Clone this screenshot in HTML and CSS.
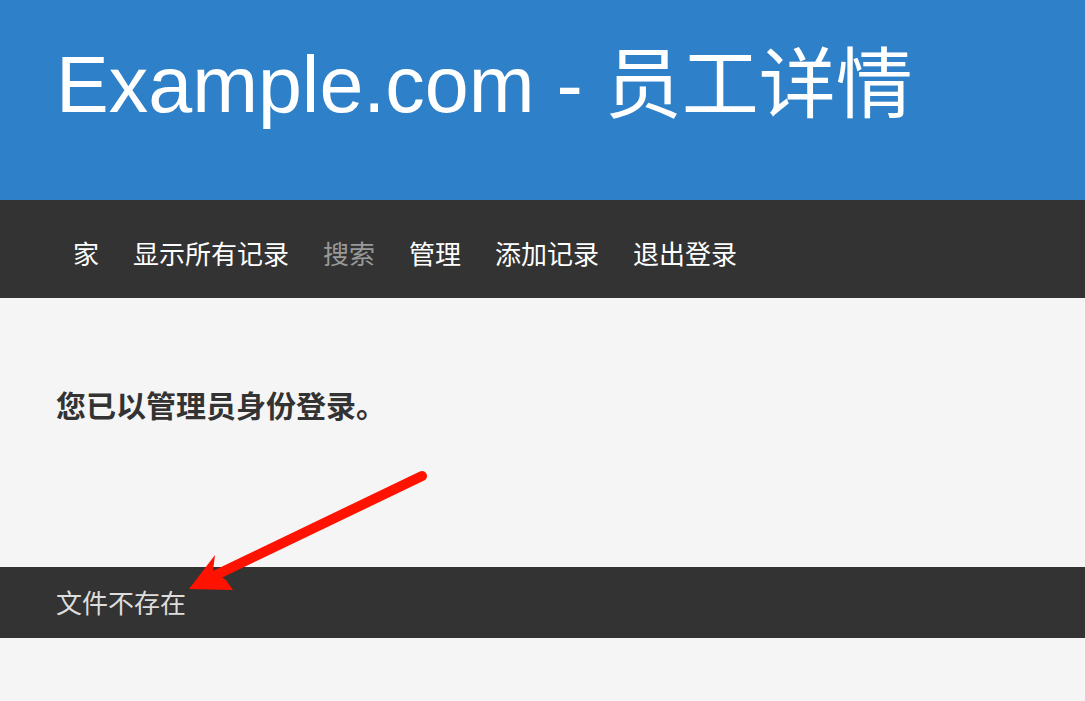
FILE: index.html
```html
<!doctype html>
<html>
	<head>
		<meta charset="utf-8"/>
		<title>Example.com - 员工详情</title>
		<link rel="stylesheet" href="styles.css">
	</head>
	<body>
		<!-----------头部--------------->
		<div class="header">
			<h1>Example.com - <span class="cn">员工详情</span></h1>
		</div>
		<!-----------导航--------------->
		<div class="nav">
			<a href="#">家</a>
			<a href="#">显示所有记录</a>
			<a href="#" class="current">搜索</a>
			<a href="#">管理</a>
			<a href="#">添加记录</a>
			<a href="#">退出登录</a>
		</div>
		<!-------------中部-------------------->
		<div class="main">
			<h3>您已以管理员身份登录。</h3>
		</div>
		<!-----------------底部----------------->
		<div class="bottom">文件不存在</div>

		<!-- 标注箭头 -->
		<svg class="mark" width="1085" height="701" viewBox="0 0 1085 701">
			<line x1="422" y1="476" x2="214" y2="576" stroke="#ff1200" stroke-width="10" stroke-linecap="round"/>
			<path d="M189 589 L215 555 L213 571 L226 580 L233 590 Z" fill="#ff1200"/>
		</svg>
	</body>
</html>
```

FILE: styles.css
```css
body{
	margin:0;
	background:#f5f5f5;
	font-family:"Liberation Sans","Noto Sans CJK SC",sans-serif;
	position:relative;
}
a{text-decoration:none;}
.header{
	height:200px;
	box-sizing:border-box;
	padding:37px 56px 0;
	background:#2e80c8;
}
.header h1{
	margin:0;
	font-size:79px;
	font-weight:normal;
	line-height:96px;
	color:#fff;
}
.header h1 .cn{font-size:77px;}
.nav{
	height:98px;
	box-sizing:border-box;
	padding:7px 56px 0;
	background:#333;
	display:flex;
	align-items:center;
}
.nav a{
	padding:0 17px;
	font-family:"Noto Sans CJK SC",sans-serif;
	font-size:26px;
	line-height:36px;
	color:#fff;
}
.nav a.current{color:#999;}
.main{
	height:269px;
	box-sizing:border-box;
	padding:88px 56px 0;
}
.main h3{
	margin:0;
	font-family:"Noto Sans CJK SC",sans-serif;
	font-size:30px;
	font-weight:bold;
	line-height:36px;
	color:#333;
}
.bottom{
	height:71px;
	box-sizing:border-box;
	padding:0 56px 2px;
	background:#333;
	display:flex;
	align-items:center;
	font-family:"Noto Sans CJK SC",sans-serif;
	font-size:26px;
	color:#ddd;
}
.mark{
	position:absolute;
	top:0;
	left:0;
	pointer-events:none;
}
```
